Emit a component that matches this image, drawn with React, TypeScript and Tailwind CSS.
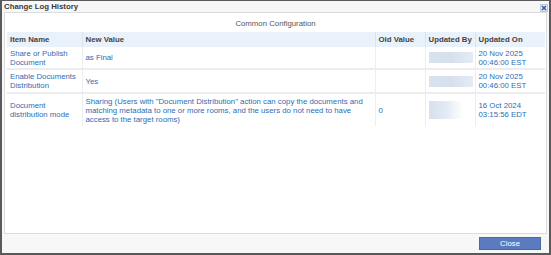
import React from 'react';

interface LogRow {
  item: string[];
  newValue: string[];
  oldValue: string;
  updatedOn: string[];
  tall?: boolean;
}

const rows: LogRow[] = [
  {
    item: ['Share or Publish', 'Document'],
    newValue: ['as Final'],
    oldValue: '',
    updatedOn: ['20 Nov 2025', '00:46:00 EST'],
  },
  {
    item: ['Enable Documents', 'Distribution'],
    newValue: ['Yes'],
    oldValue: '',
    updatedOn: ['20 Nov 2025', '00:46:00 EST'],
  },
  {
    item: ['Document', 'distribution mode'],
    newValue: [
      'Sharing (Users with "Document Distribution" action can copy the documents and',
      'matching metadata to one or more rooms, and the users do not need to have',
      'access to the target rooms)',
    ],
    oldValue: '0',
    updatedOn: ['16 Oct 2024', '03:15:56 EDT'],
    tall: true,
  },
];

const Lines: React.FC<{ lines: string[] }> = ({ lines }) => (
  <>
    {lines.map((l, i) => (
      <div key={i}>{l}</div>
    ))}
  </>
);

const App: React.FC = () => {
  return (
    <div
      className="w-[551px] h-[255px] bg-[#f7f7f7] border-x-2 border-b-2 border-t border-[#5a5a5a] flex flex-col text-[7.8px] leading-[9px]"
      style={{ fontFamily: '"Liberation Sans", Arial, sans-serif' }}
    >
      {/* title bar */}
      <div className="h-[11px] flex items-center justify-between pl-[2px] pr-[1px]">
        <span className="font-bold text-[#3a3a3a] text-[7.8px] leading-[10px]">Change Log History</span>
        <span className="w-[8px] h-[8px] bg-[#dfe8f4] border border-[#b9c9de] flex items-center justify-center mt-[2px]">
          <svg width="6" height="6" viewBox="0 0 6 6">
            <path d="M1 1 L5 5 M5 1 L1 5" stroke="#2f5597" strokeWidth="1.4" />
          </svg>
        </span>
      </div>

      {/* panel */}
      <div className="mx-[2px] h-[222px] bg-white border border-[#dcdcdc] flex flex-col">
        <div className="h-[19px] flex items-center justify-center text-[#555] pt-[1px]">Common Configuration</div>
        <div className="pl-[2px]">
          <table className="border-collapse table-fixed w-[538px]">
            <colgroup>
              <col className="w-[75px]" />
              <col className="w-[293px]" />
              <col className="w-[50px]" />
              <col className="w-[50px]" />
              <col className="w-[70px]" />
            </colgroup>
            <thead>
              <tr className="h-[15px] bg-[#e9f1fa] text-[#444] font-bold text-left">
                <th className="pl-[3px] border-r border-[#dde3ea] font-bold">Item Name</th>
                <th className="pl-[3px] border-r border-[#dde3ea] font-bold">New Value</th>
                <th className="pl-[3px] border-r border-[#dde3ea] font-bold">Old Value</th>
                <th className="pl-[3px] border-r border-[#dde3ea] font-bold whitespace-nowrap">Updated By</th>
                <th className="pl-[3px] font-bold whitespace-nowrap">Updated On</th>
              </tr>
            </thead>
            <tbody className="text-[#2e6db4]">
              {rows.map((r, i) => (
                <tr
                  key={i}
                  className={`${r.tall ? 'h-[33px]' : i === 0 ? 'h-[22px]' : 'h-[24px]'} ${
                    i < rows.length - 1 ? 'border-b-2 border-[#ededed]' : ''
                  }`}
                >
                  <td className="pl-[3px] align-middle border-r border-[#eeeeee]">
                    <Lines lines={r.item} />
                  </td>
                  <td className="pl-[3px] align-middle border-r border-[#eeeeee] whitespace-nowrap">
                    <Lines lines={r.newValue} />
                  </td>
                  <td className="pl-[3px] align-middle border-r border-[#eeeeee]">{r.oldValue}</td>
                  <td className="pl-[3px] align-middle border-r border-[#eeeeee]">
                    <div
                      className={`${
                        r.tall
                          ? 'h-[18px] w-[34px] bg-gradient-to-r from-[#d6e1ee] via-[#e3eaf3] to-white'
                          : 'h-[11px] w-[44px] bg-gradient-to-r from-[#d9e3ef] via-[#d6e0ed] to-[#e4ebf4]'
                      } blur-[0.6px]`}
                    />
                  </td>
                  <td className="pl-[3px] align-middle whitespace-nowrap">
                    <Lines lines={r.updatedOn} />
                  </td>
                </tr>
              ))}
            </tbody>
          </table>
        </div>
      </div>

      {/* footer */}
      <div className="flex-1 flex items-center justify-end pr-[8px]">
        <button className="w-[62px] h-[13px] bg-[#5a7cbf] border border-[#4a69a8] text-white text-[7.8px] leading-[10px] flex items-center justify-center">
          Close
        </button>
      </div>
    </div>
  );
};

export default App;
